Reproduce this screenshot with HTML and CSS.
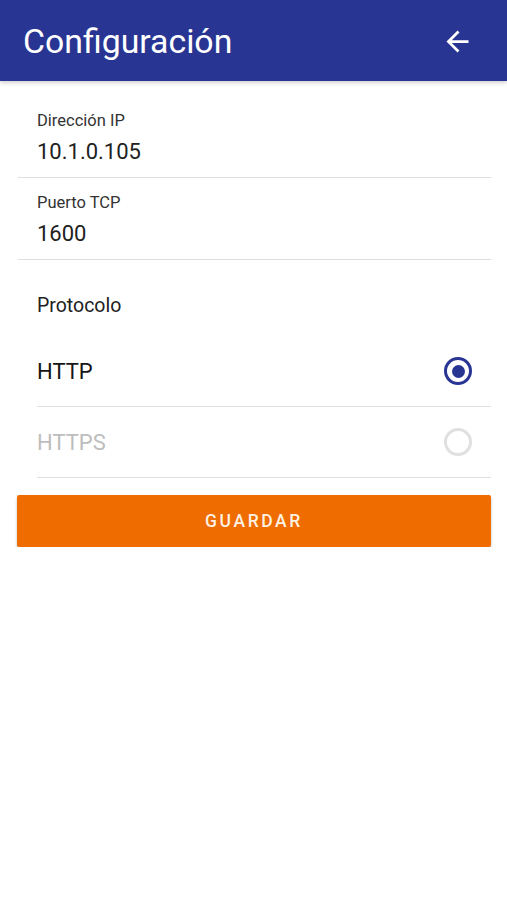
FILE: index.html
```html
<!DOCTYPE html>
<html lang="es">
<head>
  <meta charset="UTF-8">
  <meta name="viewport" content="width=device-width, initial-scale=1.0">
  <title>Configuración</title>
  <link rel="stylesheet" href="styles.css">
</head>
<body>
  <header class="toolbar">
    <h1>Configuración</h1>
    <button class="back" aria-label="Volver">
      <svg viewBox="0 0 24 24" width="33" height="33">
        <path d="M20 11H7.83l5.59-5.59L12 4l-8 8 8 8 1.41-1.41L7.83 13H20v-2z" fill="#fff"/>
      </svg>
    </button>
  </header>

  <main class="content">
    <div class="field">
      <label for="ip">Dirección IP</label>
      <input type="text" id="ip" value="10.1.0.105">
    </div>
    <div class="field">
      <label for="port">Puerto TCP</label>
      <input type="text" id="port" value="1600">
    </div>

    <div class="protocol">
      <p class="protocol-title">Protocolo</p>
      <div class="option">
        <span>HTTP</span>
        <span class="radio checked"></span>
      </div>
      <div class="option disabled">
        <span>HTTPS</span>
        <span class="radio"></span>
      </div>
    </div>

    <button class="save">GUARDAR</button>
  </main>
</body>
</html>
```
FILE: styles.css
```css
body {
  margin: 0;
  font-family: Roboto, "Liberation Sans", sans-serif;
  background-color: #fff;
  color: #212121;
}
.toolbar {
  height: 81px;
  background-color: #283593;
  display: flex;
  align-items: center;
  justify-content: space-between;
  padding: 1px 33px 0 23px;
  box-sizing: border-box;
  box-shadow: 0 2px 4px rgba(0, 0, 0, 0.18);
}
.toolbar h1 {
  margin: 0;
  font-size: 33.8px;
  font-weight: 400;
  color: #fff;
}
.back {
  background: none;
  border: none;
  padding: 0;
  display: flex;
}
.content {
  padding: 15px 16px 0 17px;
}
.field {
  border-bottom: 1px solid #dedede;
  padding: 15px 19px 11px 19px;
  margin-left: 1px;
}
.field label {
  display: block;
  font-size: 16.5px;
  line-height: 20px;
  color: #333;
}
.field input {
  display: block;
  width: 100%;
  margin-top: 7px;
  padding: 0;
  border: none;
  font-family: inherit;
  font-size: 22px;
  line-height: 28px;
  height: 28px;
  color: #212121;
  outline: none;
}
.protocol {
  padding-left: 20px;
}
.protocol-title {
  margin: 34px 0 18px;
  font-size: 19.5px;
  line-height: 24px;
  color: #212121;
}
.option {
  height: 71px;
  display: flex;
  align-items: center;
  justify-content: space-between;
  padding-right: 19px;
  border-bottom: 1.5px solid #e0e0e0;
  box-sizing: border-box;
  font-size: 22px;
  color: #151515;
}
.option.disabled {
  color: #bdbdbd;
}
.radio {
  width: 28px;
  height: 28px;
  border-radius: 50%;
  border: 3px solid #e0e0e0;
  box-sizing: border-box;
  display: flex;
  align-items: center;
  justify-content: center;
}
.radio.checked {
  border-color: #283593;
}
.radio.checked::after {
  content: "";
  width: 13px;
  height: 13px;
  border-radius: 50%;
  background-color: #283593;
}
.save {
  display: block;
  width: 100%;
  height: 52px;
  margin-top: 17px;
  background-color: #ef6c00;
  color: #fdf1e2;
  border: none;
  border-radius: 2px;
  font-family: inherit;
  font-size: 17.5px;
  font-weight: 500;
  letter-spacing: 2.6px;
  box-shadow: 0 2px 3px rgba(0, 0, 0, 0.25);
}
```
